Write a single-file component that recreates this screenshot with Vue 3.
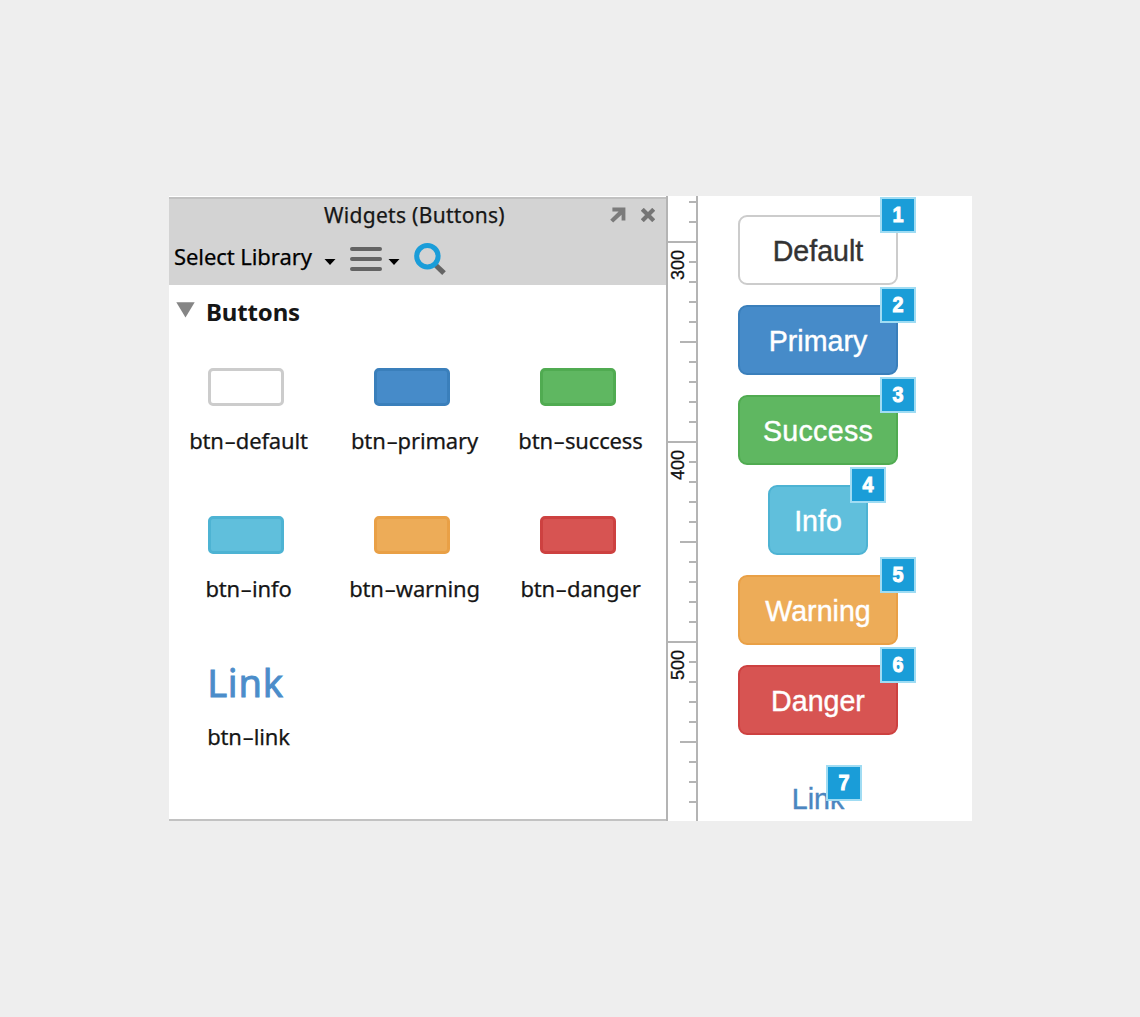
<script setup>
const widgets = ['default', 'primary', 'success', 'info', 'warning', 'danger', 'link']
const buttons = [
  { kind: 'default', label: 'Default' },
  { kind: 'primary', label: 'Primary' },
  { kind: 'success', label: 'Success' },
  { kind: 'info', label: 'Info' },
  { kind: 'warning', label: 'Warning' },
  { kind: 'danger', label: 'Danger' },
  { kind: 'link', label: 'Link' },
]
const ticks = Array.from({ length: 31 }, (_, i) => {
  const major = i % 10 === 2
  return { size: major ? 'major' : i % 10 === 7 ? 'mid' : 'minor', label: major ? 300 + (i - 2) * 10 : '' }
})
</script>

<template>
  <main class="page">
    <div class="window">
      <section class="panel">
        <header class="head">
          <div class="titlebar">
            <span class="title">Widgets (Buttons)</span>
            <svg class="expand" width="16" height="16" viewBox="0 0 16 16"><path d="M2.4 .6H15.4V13.4H11.6V7.8L3.2 15.6L.2 12.7L8.6 4.6H2.4Z" fill="#7b7b7b" /></svg>
            <svg class="close" width="14" height="14" viewBox="0 0 14 14"><path d="M1.3 1.3L12.7 12.7M12.7 1.3L1.3 12.7" stroke="#757575" stroke-width="4.2" /></svg>
          </div>
          <div class="toolbar">
            <span class="select">Select Library</span>
            <svg class="caret" width="12" height="6" viewBox="0 0 12 6"><path d="M.5 0H11.5L6 6Z" /></svg>
            <svg class="menu" width="32" height="24" viewBox="0 0 32 24"><path d="M2 2H30M2 12H30M2 22H30" stroke="#636363" stroke-width="4" stroke-linecap="round" /></svg>
            <svg class="caret caret2" width="12" height="6" viewBox="0 0 12 6"><path d="M.5 0H11.5L6 6Z" /></svg>
            <svg class="search" width="34" height="34" viewBox="0 0 34 34"><path d="M21.5 22L30 30.2" stroke="#646464" stroke-width="5.2" /><circle cx="13.4" cy="13.2" r="10.7" fill="none" stroke="#1a9dd9" stroke-width="5" /></svg>
          </div>
        </header>
        <div class="group">
          <svg width="19" height="16" viewBox="0 0 19 16"><path d="M.3 .2H18.7L9.5 15.6Z" fill="#858585" /></svg>
          <h2>Buttons</h2>
        </div>
        <div class="grid">
          <div v-for="w in widgets" :key="w" class="widget">
            <div v-if="w === 'link'" class="linkthumb">Link</div>
            <div v-else class="thumb" :class="w"></div>
            <div class="name">btn<span class="dash">-</span>{{ w }}</div>
          </div>
        </div>
      </section>
      <aside class="ruler">
        <div v-for="(t, i) in ticks" :key="i" class="tick" :class="t.size">
          <span v-if="t.label" class="num">{{ t.label }}</span>
        </div>
      </aside>
      <section class="canvas">
        <div v-for="(b, i) in buttons" :key="b.kind" class="btn" :class="b.kind">
          <span class="label">{{ b.label }}</span>
          <span class="badge"><b>{{ i + 1 }}</b></span>
        </div>
      </section>
    </div>
  </main>
</template>

<style>
body { margin: 0; background: #eeeeee; }
</style>

<style scoped>
* { box-sizing: border-box; }
.page { height: 1017px; padding: 196px 0 0 169px; background: #eeeeee; overflow: hidden; }
.window { width: 803px; height: 625px; display: flex; background: #fff; overflow: hidden; }
.panel { width: 497px; border-bottom: 2px solid #c2c2c2; font-family: "Noto Sans", sans-serif; padding-top: 1px; color: #161616; -webkit-text-stroke: 0.25px; }
.head { height: 88px; background: #d3d3d3; border-top: 2px solid #c1c1c1; }
.titlebar { height: 32px; display: flex; align-items: center; padding-left: 155px; }
.title { width: 287px; font-size: 21px; line-height: 30px; letter-spacing: 0.3px; white-space: nowrap; }
.expand { margin-left: -1px; }
.close { margin-left: 15px; }
.toolbar { height: 54px; display: flex; align-items: center; padding-left: 5px; color: #000; }
.select { width: 150px; font-size: 22px; line-height: 30px; letter-spacing: -0.07px; white-space: nowrap; margin-top: -5px; }
.caret { margin-top: 7px; }
.menu { margin: 2px 0 0 14px; }
.caret2 { margin-left: 6px; }
.search { margin: 3px 0 0 14px; }
.group { height: 55px; display: flex; padding: 17px 0 0 7px; }
h2 { margin: -7px 0 0 11px; font-size: 24px; line-height: 34px; font-weight: 700; letter-spacing: -0.15px; -webkit-text-stroke: 0; }
.grid { display: grid; grid-template-columns: repeat(3, 166px); grid-auto-rows: 148px; margin-left: -6px; padding-top: 28px; }
.widget { display: flex; flex-direction: column; align-items: center; }
.thumb { width: 76px; height: 38px; border: 3px solid; border-radius: 5px; }
.linkthumb { height: 38px; padding-right: 1px; font-size: 38px; line-height: 36px; letter-spacing: 0.8px; color: #4b8dca; -webkit-text-stroke: 0.9px; }
.name { margin-top: 19px; padding-left: 5px; font-size: 22px; line-height: 30px; letter-spacing: -0.15px; white-space: nowrap; }
.dash { display: inline-block; width: 12px; text-align: center; transform: scaleX(1.75); -webkit-text-stroke: 0; }
.ruler { width: 32px; border-left: 2px solid #b4b4b4; border-right: 2px solid #b4b4b4; padding-top: 5px; display: flex; flex-direction: column; align-items: flex-end; }
.tick { flex: 0 0 20px; width: 7px; position: relative; }
.tick::before { content: ""; display: block; height: 2px; background: #b4b4b4; }
.mid { width: 16px; }
.major { width: 28px; }
.num { position: absolute; left: 0; top: 8px; height: 32px; writing-mode: vertical-rl; transform: rotate(180deg); font: 18px/20px "Liberation Sans", sans-serif; color: #111; text-align: center; -webkit-text-stroke: 0.3px; }
.canvas { width: 240px; padding-top: 19px; display: flex; flex-direction: column; align-items: center; gap: 20px; font-family: "Liberation Sans", sans-serif; }
.btn { position: relative; flex: 0 0 70px; height: 70px; width: 160px; border: 2px solid; border-radius: 9px; text-align: center; font-size: 28.6px; line-height: 68px; }
.label { color: #fff; -webkit-text-stroke: 0.4px; white-space: nowrap; }
.btn.default .label { color: #333; }
.btn.success .label { letter-spacing: 0.3px; }
.default { background: #fff; border-color: #cccccc; }
.primary { background: #468bc9; border-color: #3a7fbb; }
.success { background: #5fb761; border-color: #50ab51; }
.info { background: #60bfdc; border-color: #4db3d3; }
.warning { background: #edac58; border-color: #e9a046; }
.danger { background: #d75452; border-color: #cd4140; }
.btn.info { width: 100px; }
.btn.link { width: 54px; border: 0; margin-top: 8px; line-height: 72px; }
.btn.link .label { color: #4b86c0; }
.badge { position: absolute; right: -20px; top: -20px; width: 36px; height: 36px; border: 2px solid #a0dcf3; background: #1a9dd8; color: #fff; font-size: 22px; line-height: 32px; -webkit-text-stroke: 1px #fff; }
.badge b { display: inline-block; transform: scaleX(0.9); }
.link .badge { top: 2px; right: -17px; }
</style>
